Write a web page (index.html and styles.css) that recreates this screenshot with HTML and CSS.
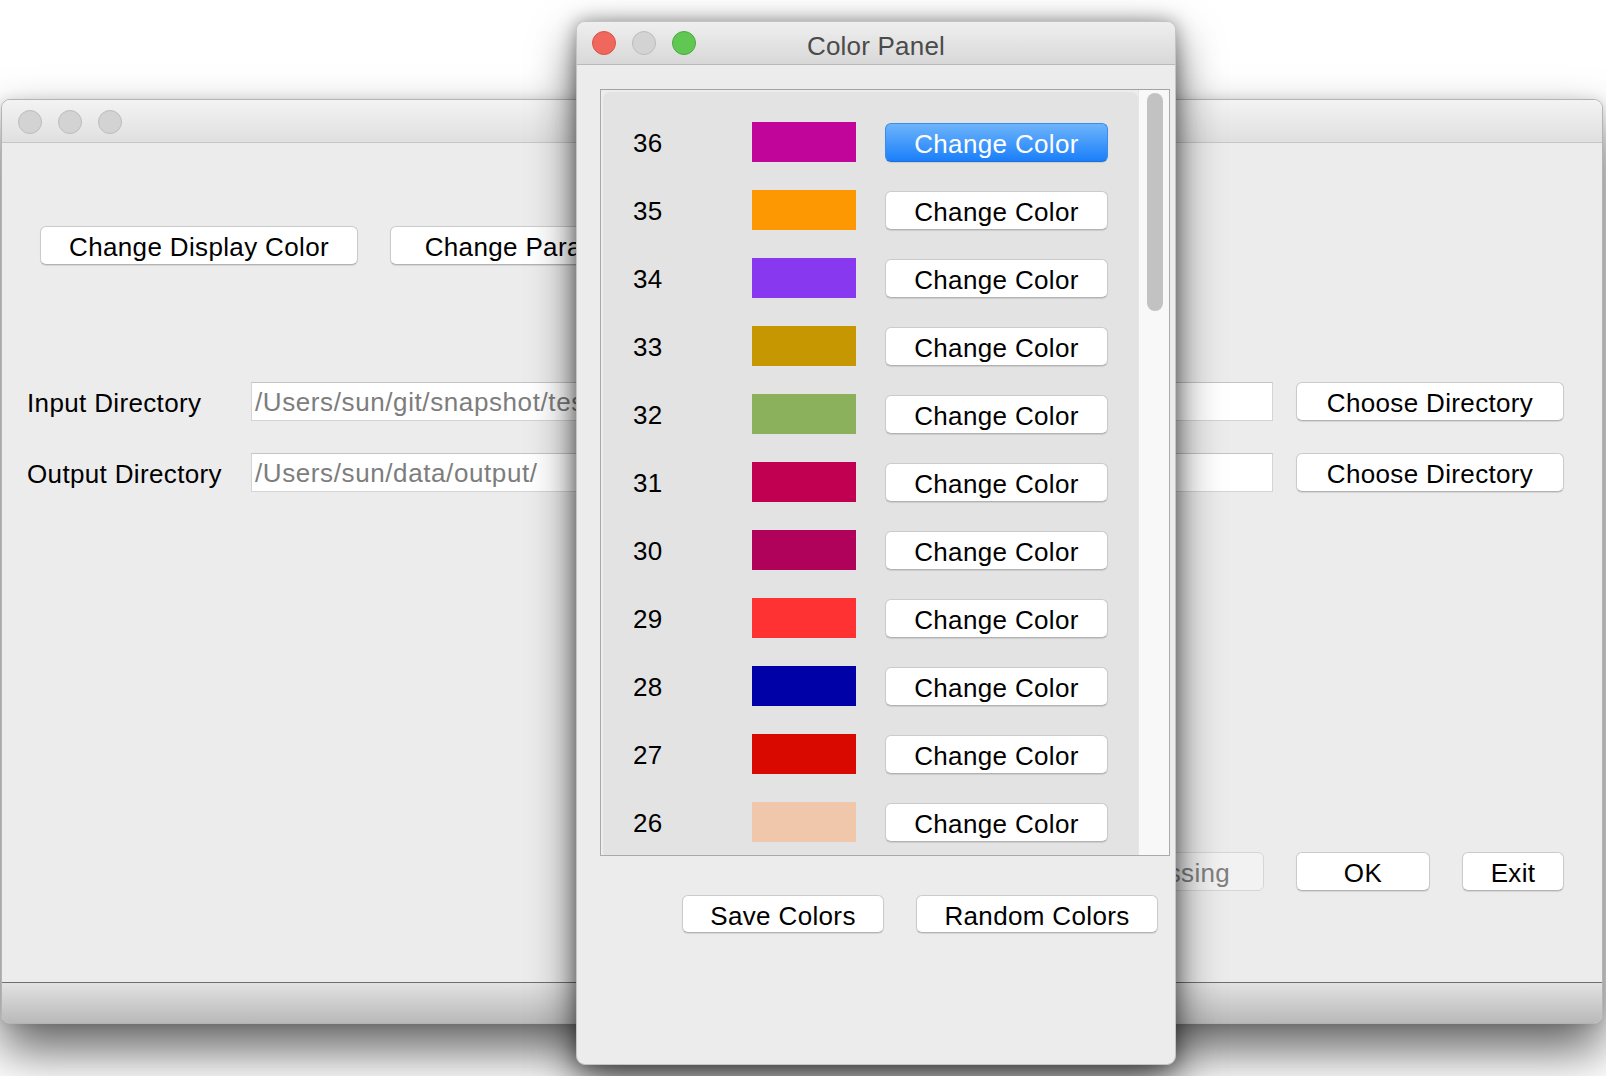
FILE: index.html
```html
<!DOCTYPE html>
<html>
<head>
<meta charset="utf-8">
<title>Color Panel</title>
<link rel="stylesheet" href="styles.css">
</head>
<body>
<div class="desktop">
  <div class="win main-win">
    <div class="titlebar">
      <div class="lights">
        <span class="light off"></span><span class="light off"></span><span class="light off"></span>
      </div>
    </div>
    <div class="main-body">
      <div class="top-buttons">
        <button class="btn btn-display">Change Display Color</button>
        <button class="btn btn-param">Change Parameters</button>
      </div>
      <div class="dir-grid">
        <div class="label">Input Directory</div>
        <div class="field">/Users/sun/git/snapshot/test/input/</div>
        <button class="btn btn-choose">Choose Directory</button>
        <div class="label">Output Directory</div>
        <div class="field">/Users/sun/data/output/</div>
        <button class="btn btn-choose">Choose Directory</button>
      </div>
      <div class="actions">
        <button class="btn btn-process" disabled>Start Processing</button>
        <button class="btn btn-ok">OK</button>
        <button class="btn btn-exit">Exit</button>
      </div>
    </div>
    <div class="statusbar"></div>
  </div>

  <div class="win dialog">
    <div class="titlebar dlg-title">
      <div class="lights">
        <span class="light red"></span><span class="light off"></span><span class="light green"></span>
      </div>
      <div class="title">Color Panel</div>
    </div>
    <div class="dlg-body">
      <div class="scrollpane">
        <div class="list-wrap">
          <div class="list">
            <div class="row"><span class="num">36</span><span class="swatch" style="background:#c2059a"></span><button class="btn btn-cc primary">Change Color</button></div>
            <div class="row"><span class="num">35</span><span class="swatch" style="background:#fd9702"></span><button class="btn btn-cc">Change Color</button></div>
            <div class="row"><span class="num">34</span><span class="swatch" style="background:#8838ee"></span><button class="btn btn-cc">Change Color</button></div>
            <div class="row"><span class="num">33</span><span class="swatch" style="background:#c69701"></span><button class="btn btn-cc">Change Color</button></div>
            <div class="row"><span class="num">32</span><span class="swatch" style="background:#8cb15d"></span><button class="btn btn-cc">Change Color</button></div>
            <div class="row"><span class="num">31</span><span class="swatch" style="background:#c10052"></span><button class="btn btn-cc">Change Color</button></div>
            <div class="row"><span class="num">30</span><span class="swatch" style="background:#b0015b"></span><button class="btn btn-cc">Change Color</button></div>
            <div class="row"><span class="num">29</span><span class="swatch" style="background:#fe3232"></span><button class="btn btn-cc">Change Color</button></div>
            <div class="row"><span class="num">28</span><span class="swatch" style="background:#0101a8"></span><button class="btn btn-cc">Change Color</button></div>
            <div class="row"><span class="num">27</span><span class="swatch" style="background:#da0900"></span><button class="btn btn-cc">Change Color</button></div>
            <div class="row"><span class="num">26</span><span class="swatch" style="background:#f1c7ab"></span><button class="btn btn-cc">Change Color</button></div>
            <div class="row"><span class="num">25</span><span class="swatch" style="background:#5aa0d8"></span><button class="btn btn-cc">Change Color</button></div>
          </div>
        </div>
        <div class="scrollbar"><div class="thumb"></div></div>
      </div>
      <div class="dlg-actions">
        <button class="btn btn-save">Save Colors</button>
        <button class="btn btn-random">Random Colors</button>
      </div>
    </div>
  </div>
</div>
</body>
</html>
```

FILE: styles.css
```css
* { box-sizing: border-box; }

html, body {
  margin: 0;
  padding: 0;
  width: 1606px;
  height: 1076px;
  overflow: hidden;
  background: #ffffff;
  font-family: "Liberation Sans", Arial, sans-serif;
  font-size: 26px;
  letter-spacing: 0.35px;
  color: #000;
}

.desktop {
  position: relative;
  width: 1606px;
  height: 1076px;
  overflow: hidden;
}

.win {
  position: absolute;
  background: #ececec;
  display: flex;
  flex-direction: column;
}

/* ---------- main (background) window ---------- */
.main-win {
  left: 1px;
  top: 99px;
  width: 1602px;
  height: 925px;
  border: 1px solid #b4b4b4;
  border-radius: 9px;
  box-shadow: 0 26px 50px rgba(0, 0, 0, 0.62), 0 0 12px rgba(0, 0, 0, 0.10);
  overflow: hidden;
}

.titlebar {
  height: 43px;
  flex: none;
  position: relative;
  background: linear-gradient(#efefef, #d8d8d8);
  border-bottom: 1px solid #b9b9b9;
  display: flex;
  align-items: center;
}

.main-win .titlebar {
  background: linear-gradient(#f3f3f3, #e0e0e0);
  border-bottom-color: #c6c6c6;
}

.lights {
  display: flex;
  gap: 16px;
  padding-left: 16px;
  position: relative;
  z-index: 1;
}

.main-win .lights { padding-left: 16px; margin-top: 1px; }

.light {
  width: 24px;
  height: 24px;
  border-radius: 50%;
  display: block;
}

.light.off { background: #d3d3d3; border: 1px solid #bcbcbc; }
.light.red { background: #f0675d; border: 1px solid #d95349; }
.light.green { background: #5fc752; border: 1px solid #4aa93f; }

.main-body {
  flex: 1;
  padding: 83px 38px 0 25px;
  display: flex;
  flex-direction: column;
}

.btn {
  font: inherit;
  letter-spacing: inherit;
  color: #000;
  background: #ffffff;
  border: 1px solid #cbcbcb;
  border-bottom-color: #b3b3b3;
  border-radius: 6px;
  box-shadow: 0 1px 1px rgba(0, 0, 0, 0.10);
  height: 39px;
  padding: 4px 0 0 0;
  margin: 0;
  line-height: 33px;
  text-align: center;
  white-space: nowrap;
  overflow: hidden;
}

.top-buttons {
  display: flex;
  gap: 32px;
  padding-left: 13px;
}

.btn-display { width: 318px; }
.btn-param { width: 308px; }

.dir-grid {
  margin-top: 117px;
  display: grid;
  grid-template-columns: 201px 1022px 268px;
  grid-auto-rows: 39px;
  column-gap: 23px;
  row-gap: 32px;
  align-items: center;
}

.label {
  height: 39px;
  line-height: 36px;
  padding-top: 3px;
  white-space: nowrap;
}

.field {
  height: 39px;
  background: #ffffff;
  border: 1px solid #d4d4d4;
  border-top-color: #c4c4c4;
  color: #7d7d7d;
  padding: 2px 0 0 3px;
  line-height: 35px;
  white-space: nowrap;
  overflow: hidden;
  letter-spacing: 0.6px;
}

.actions {
  margin-top: 360px;
  display: flex;
  justify-content: flex-end;
  gap: 32px;
}

.btn-process {
  width: 264px;
  color: #808080;
  background: #f2f2f2;
  border-color: #d6d6d6;
  box-shadow: none;
}

.btn-ok { width: 134px; }
.btn-exit { width: 102px; }

.statusbar {
  height: 41px;
  flex: none;
  border-top: 1px solid #6e6e6e;
  background: linear-gradient(#e2e2e2, #b9b9b9);
}

/* ---------- color panel dialog ---------- */
.dialog {
  left: 576px;
  top: 21px;
  width: 600px;
  height: 1044px;
  border: 1px solid #c4c4c4;
  border-radius: 9px;
  box-shadow: 0 20px 45px rgba(0, 0, 0, 0.62), 0 0 18px rgba(0, 0, 0, 0.35);
  overflow: hidden;
}

.dlg-title .lights { padding-left: 15px; }

.title {
  position: absolute;
  left: 0;
  right: 0;
  top: 2px;
  bottom: 0;
  text-align: center;
  line-height: 44px;
  color: #4b4b4b;
  letter-spacing: 0.2px;
}

.dlg-body {
  flex: 1;
  padding: 24px 5px 0 23px;
  display: flex;
  flex-direction: column;
}

.scrollpane {
  height: 767px;
  border: 1px solid #aaaaaa;
  border-top-color: #a2a2a2;
  background: #ededed;
  display: flex;
}

.list-wrap {
  flex: 1;
  padding: 2px 0 0 2px;
  overflow: hidden;
}

.list {
  height: 100%;
  background: #e3e3e3;
  border-radius: 7px 7px 0 0;
  padding: 16px 0 0 30px;
  overflow: hidden;
}

.row {
  height: 68px;
  display: flex;
  align-items: center;
}

.num {
  width: 119px;
  flex: none;
  padding-top: 3px;
}

.swatch {
  width: 104px;
  height: 40px;
  flex: none;
  display: block;
}

.btn-cc {
  margin-left: 29px;
  width: 223px;
  height: 39px;
  flex: none;
}

.btn-cc.primary {
  color: #ffffff;
  background: linear-gradient(#6db4fb, #1b7ffa);
  border: 1px solid #3a8cf0;
  border-bottom-color: #1d6fd8;
}

.scrollbar {
  width: 31px;
  flex: none;
  background: #f8f8f8;
  border-left: 1px solid #e6e6e6;
  padding: 3px 0 0 8px;
}

.thumb {
  width: 16px;
  height: 218px;
  border-radius: 8px;
  background: #c2c2c2;
}

.dlg-actions {
  margin-top: 39px;
  display: flex;
  justify-content: flex-end;
  gap: 32px;
  padding-right: 12px;
}

.btn-save { width: 202px; height: 38px; }
.btn-random { width: 242px; height: 38px; }
```
